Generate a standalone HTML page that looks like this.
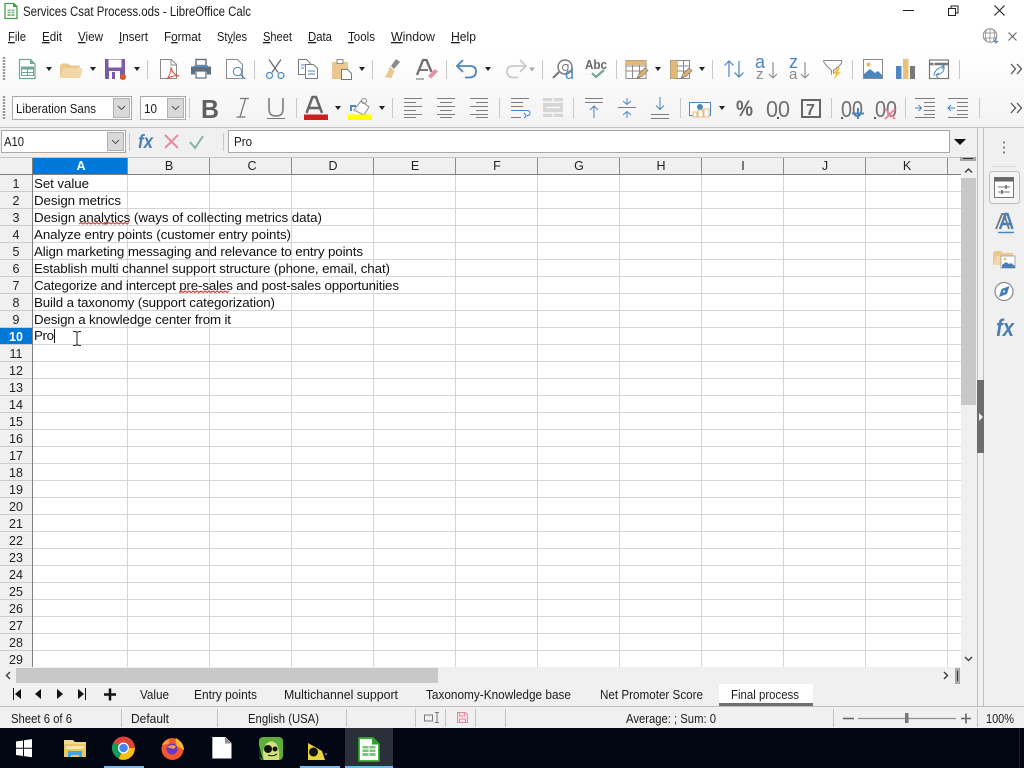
<!DOCTYPE html>
<html><head><meta charset="utf-8"><title>Services Csat Process.ods - LibreOffice Calc</title>
<style>
html,body{margin:0;padding:0;width:1024px;height:768px;overflow:hidden;background:#fff}
svg{display:block}
text{font-family:"Liberation Sans",sans-serif;fill:#1c1c1c}
.ui{font-size:13px}
.c{font-size:13.33px;fill:#111}
.h{font-size:12.5px;text-anchor:middle;fill:#222}
.r{font-size:12.5px;text-anchor:middle;fill:#222}
</style></head><body>
<svg width="1024" height="768" viewBox="0 0 1024 768" xmlns="http://www.w3.org/2000/svg">
<defs>
<linearGradient id="tb" x1="0" y1="0" x2="0" y2="1"><stop offset="0" stop-color="#fff"/><stop offset="1" stop-color="#f3f3f3"/></linearGradient>
</defs>
<rect width="1024" height="768" fill="#fff"/>
<rect x="0" y="50" width="1024" height="77" fill="url(#tb)"/>
<rect x="0" y="127" width="1024" height="1" fill="#c4c4c4"/>
<rect x="0" y="128" width="1024" height="30" fill="#f0f0f0"/>

<!-- title -->
<path d="M5 3.500h9l3 3v12H5z" fill="#fff" stroke="#43a047" stroke-width="1.300"/><path d="M13 3l4 4h-4z" fill="#43a047"/><path d="M7.500 9.500h7v6.500h-7z" fill="#7cb87f"/><path d="M7.500 11.500h7M7.500 13.700h7M11 9.500v6.500" stroke="#fff" stroke-width=".8"/>
<text x="23" y="16" font-size="13.500" textLength="228" lengthAdjust="spacingAndGlyphs">Services Csat Process.ods - LibreOffice Calc</text>
<path d="M903 10.500h11" stroke="#222" stroke-width="1"/>
<path d="M951 8V6h7v7h-2.500" fill="none" stroke="#222"/><rect x="948.500" y="8.500" width="7" height="7" fill="none" stroke="#222"/>
<path d="M994.500 5.500l10 10M1004.500 5.500l-10 10" stroke="#222" stroke-width="1.100"/>

<!-- menu -->
<g>
<text x="8" y="41" class="ui" textLength="18" lengthAdjust="spacingAndGlyphs"><tspan text-decoration="underline">F</tspan>ile</text>
<text x="42" y="41" class="ui" textLength="20" lengthAdjust="spacingAndGlyphs"><tspan text-decoration="underline">E</tspan>dit</text>
<text x="78" y="41" class="ui" textLength="25" lengthAdjust="spacingAndGlyphs"><tspan text-decoration="underline">V</tspan>iew</text>
<text x="119" y="41" class="ui" textLength="29" lengthAdjust="spacingAndGlyphs"><tspan text-decoration="underline">I</tspan>nsert</text>
<text x="164" y="41" class="ui" textLength="37" lengthAdjust="spacingAndGlyphs">F<tspan text-decoration="underline">o</tspan>rmat</text>
<text x="217" y="41" class="ui" textLength="30" lengthAdjust="spacingAndGlyphs">St<tspan text-decoration="underline">y</tspan>les</text>
<text x="263" y="41" class="ui" textLength="29" lengthAdjust="spacingAndGlyphs"><tspan text-decoration="underline">S</tspan>heet</text>
<text x="308" y="41" class="ui" textLength="24" lengthAdjust="spacingAndGlyphs"><tspan text-decoration="underline">D</tspan>ata</text>
<text x="348" y="41" class="ui" textLength="27" lengthAdjust="spacingAndGlyphs"><tspan text-decoration="underline">T</tspan>ools</text>
<text x="391" y="41" class="ui" textLength="44" lengthAdjust="spacingAndGlyphs"><tspan text-decoration="underline">W</tspan>indow</text>
<text x="451" y="41" class="ui" textLength="25" lengthAdjust="spacingAndGlyphs"><tspan text-decoration="underline">H</tspan>elp</text>
</g>
<!-- globe + close -->
<circle cx="990" cy="35.500" r="6.800" fill="none" stroke="#8a8a8a"/><path d="M983.500 33h13M983.500 38h13M990 29v13M986.500 30q-2 5.500 0 11M993.500 30q2 5.500 0 11" stroke="#8a8a8a" stroke-width=".8" fill="none"/><path d="M996 37v6M994 41l2 2 2-2" stroke="#4a86c0" fill="none"/>
<path d="M1008.500 32.500l8 8M1016.500 32.500l-8 8" stroke="#666" stroke-width="1.100"/>

<!-- toolbar 1 -->
<g fill="none">
<path d="M4 57v23" stroke="#9a9a9a" stroke-width="2.500" stroke-dasharray="2 1"/>
<path d="M4 96v23" stroke="#9a9a9a" stroke-width="2.500" stroke-dasharray="2 1"/>
<g stroke="#c8c8c8"><path d="M147.500 60v19M254.500 60v19M372.500 60v19M446.500 60v19M542.500 60v19M616.500 60v19M712.500 60v19M852.500 60v19M959.500 60v19"/>
<path d="M189.500 98v20M296.500 98v20M392.500 98v20M499.500 98v20M573.500 98v20M680.500 98v20M831.500 98v20M905.500 98v20M979.500 98v20"/></g>
<!-- new -->
<path d="M19.500 59.500h11l4.500 4.500v14.500H19.500z" stroke="#6fa894" stroke-width="1.200" fill="#fff"/><path d="M30 59l5 5h-5z" fill="#6fa894"/><rect x="21.500" y="67" width="12" height="8.500" fill="#fff" stroke="#6fa894"/><path d="M21.500 67h12v2.500h-12z" fill="#6fa894"/><path d="M21.500 72.500h12M27.500 69v6" stroke="#6fa894"/>
<!-- folder -->
<path d="M60 78V65.500l2-2h6l2 2h10v2l-1 0z" fill="#e9c78f"/><path d="M60 78l3-10h19.500l-2 10z" fill="#f3d7a7"/>
<!-- save -->
<path d="M105 59h20v20h-20z" fill="#7c5aa6"/><rect x="108.500" y="59.500" width="13" height="8" fill="#fff"/><rect x="109" y="71" width="11" height="8" fill="#fff"/><rect x="112" y="72" width="3" height="7" fill="#7c5aa6"/><circle cx="123" cy="77" r="3" fill="#e0552f"/>
<!-- pdf -->
<path d="M160.500 59.500h11l5 5v14h-16z" stroke="#8b8b8b" fill="#fff"/><path d="M171 60v5h5" stroke="#8b8b8b"/><path d="M167 79q4-5 4-12q1 7 8 9q-7-1-12 3z" stroke="#d8553c"/>
<!-- print -->
<rect x="196" y="59.500" width="10" height="6" fill="#fff" stroke="#606f7c" stroke-width="1.400"/><path d="M191 66.500h20v8h-4v-3h-12v3h-4z" fill="#606f7c"/><rect x="196" y="71" width="10" height="7" fill="#fff" stroke="#606f7c" stroke-width="1.200"/><path d="M194 66h14" stroke="#5a96cf" stroke-width="1.500"/>
<!-- preview -->
<path d="M226.500 59.500h11l5 5v14h-16z" stroke="#8b8b8b" fill="#fff"/><circle cx="237.500" cy="71.500" r="4.200" stroke="#4a86c0" fill="#fff"/><path d="M240.500 74.500l4.500 4.500" stroke="#4a86c0" stroke-width="1.300"/>
<!-- cut -->
<path d="M269 59.500l9 13M281 59.500l-9 13" stroke="#6b6b6b" stroke-width="1.300"/><circle cx="269.500" cy="75.500" r="3" stroke="#4a86c0" stroke-width="1.200"/><circle cx="281" cy="75.500" r="3" stroke="#4a86c0" stroke-width="1.200"/>
<!-- copy -->
<path d="M298.500 59.500h8l4 4v11h-12z" stroke="#7a7a7a" fill="#fff"/><path d="M305.500 64.500h8l4 4v10h-12z" stroke="#7a7a7a" fill="#fff"/><path d="M301 65h4M301 68h3M308 71h7M308 74h7" stroke="#4a86c0"/>
<!-- paste -->
<path d="M332 62h16v17h-16z" fill="#e9c78f"/><rect x="337" y="59.500" width="6" height="4" stroke="#8b8b8b" fill="#fff"/><path d="M341.500 69.500h6l4 4v6h-10z" fill="#fff" stroke="#777"/>
<!-- brush -->
<path d="M396 59l4 3-6 7-3-3z" fill="#8b8b8b"/><path d="M389.500 66.500l5 4.500-3 7-7-1q4-4 5-10.500z" fill="#e9c78f"/>
<!-- clear -->
<path d="M417 75l6-15h3.500l5 12" stroke="#6e6e6e" stroke-width="2.300"/><path d="M420 70h8" stroke="#6e6e6e" stroke-width="1.800"/><path d="M416 79h8" stroke="#6e6e6e"/><path d="M428 76l7-7 3 2.500-7 7z" fill="#e88ea0"/>
<!-- undo -->
<path d="M463 60l-6 6 6 6M457.500 66h12.500q6 0 6 5.500t-6 6h-5" stroke="#4a86c0" stroke-width="1.800"/>
<!-- redo -->
<path d="M520 60l6 6-6 6M525.500 66H513q-6 0-6 5.500t6 6h5" stroke="#c9c9c9" stroke-width="1.800"/>
<!-- find -->
<circle cx="565" cy="67" r="7" stroke="#777" stroke-width="1.400"/><path d="M559 72l-6 6" stroke="#777" stroke-width="2"/><path d="M568 66a3 3 0 1 0 0 3v-5" stroke="#777"/>
<text x="565" y="79" font-size="16" style="fill:#4a86c0">d</text>
<!-- spell -->
<text x="585" y="69" font-size="12.500" font-weight="bold" style="fill:#666" textLength="22" lengthAdjust="spacingAndGlyphs">Abc</text><path d="M592 73l4 4 8-7" stroke="#6fa894" stroke-width="2.200"/>
<!-- table icons -->
<g stroke="#8b8b8b"><rect x="626" y="60.500" width="20" height="18" fill="#fff"/><path d="M626 66h20M626 71h20M632.500 61v17M639.500 61v17"/></g><rect x="626" y="60.500" width="20" height="4.500" fill="#e0b878"/><path d="M637 78l2-4 6-6 3 2.500-6 6z" fill="#e2b06c" stroke="#777" stroke-width=".7"/>
<g stroke="#8b8b8b"><rect x="670.500" y="60.500" width="19" height="18" fill="#fff"/><path d="M670 66h20M670 71h20M677 61v17M683.500 61v17"/></g><rect x="670.500" y="60.500" width="6.500" height="18" fill="#e0b878"/><path d="M681 78l2-4 6-6 3 2.500-6 6z" fill="#e2b06c" stroke="#777" stroke-width=".7"/>
<!-- sort -->
<path d="M729 77V61M724.500 65.500L729 61l4.500 4.500M739 61v16M734.500 72.500L739 77l4.500-4.500" stroke="#4a86c0" stroke-width="1.200"/>
<text x="755" y="68" font-size="18" style="fill:#4a86c0">a</text><text x="756" y="79" font-size="15" style="fill:#8a8a8a">z</text><path d="M773 62v16M769 74l4 4 4-4" stroke="#888" stroke-width="1.100"/>
<text x="789" y="68" font-size="18" style="fill:#4a86c0">z</text><text x="789" y="79" font-size="15" style="fill:#8a8a8a">a</text><path d="M805 62v16M801 74l4 4 4-4" stroke="#888" stroke-width="1.100"/>
<!-- autofilter -->
<path d="M823.500 60.500h18q1 2-2 5l-6 5v3" stroke="#888"/><path d="M823.500 60.500q0 2 3 5l5 5v4" stroke="#888"/><path d="M838 67l-5 7h3l-3 6 8-8h-3l2-5z" fill="#f0c050"/>
<!-- image -->
<rect x="863.500" y="59.500" width="19" height="19" stroke="#8a8a8a" fill="#fff"/><circle cx="868.500" cy="64.500" r="2" fill="#e9b75e"/><path d="M864 78v-4l6-5 5 4 3-2 4 4v3z" fill="#4a86c0"/>
<!-- chart -->
<rect x="896" y="66" width="5.500" height="13" fill="#4a86c0"/><rect x="903" y="59" width="5.500" height="20" fill="#e9c078"/><rect x="910" y="66" width="5" height="13" fill="#777"/>
<!-- pivot -->
<rect x="929.500" y="60" width="19" height="18.500" stroke="#777" stroke-width="1.200" fill="#fff"/><path d="M930 64h18" stroke="#777" stroke-width="2.500"/><path d="M934 61v4" stroke="#fff"/><path d="M934 76q0-7 10-10M941 64l3 2-2 3M944 66q1 7-7 9M939 73l-3 2 2 3" stroke="#4a86c0"/>
<!-- >> -->
<path d="M1011 64l4.500 5-4.500 5M1017 64l4.500 5-4.500 5" stroke="#555" stroke-width="1.300"/>
<path d="M1011 103l4.500 5-4.500 5M1017 103l4.500 5-4.500 5" stroke="#555" stroke-width="1.300"/>

<!-- Toolbar 2 -->
<rect x="12.500" y="96.500" width="119" height="23" fill="#fff" stroke="#a9a9a9"/><rect x="113.500" y="98.500" width="16" height="19" fill="#d9d9d9" stroke="#b0b0b0"/><path d="M118 106l3.500 3.500 3.500-3.500" stroke="#555"/>
<rect x="140.500" y="96.500" width="45" height="23" fill="#fff" stroke="#a9a9a9"/><rect x="167.500" y="98.500" width="16" height="19" fill="#d9d9d9" stroke="#b0b0b0"/><path d="M172 106l3.500 3.500 3.500-3.500" stroke="#555"/>
</g>
<text x="16" y="113" font-size="13" textLength="80" lengthAdjust="spacingAndGlyphs">Liberation Sans</text>
<text x="144" y="113" font-size="13" textLength="13" lengthAdjust="spacingAndGlyphs">10</text>
<text x="201" y="118" font-size="26" font-weight="bold" style="fill:#606060" textLength="18" lengthAdjust="spacingAndGlyphs">B</text>
<g fill="none">
<path d="M240 98.500h9M236.500 117h9M245.500 98.500l-5.500 18.500" stroke="#777" stroke-width="1.300"/>
<path d="M269 98v11q0 7 7 7t7-7V98" stroke="#777" stroke-width="1.500"/><path d="M267 118.500h18" stroke="#777"/>
<path d="M306.500 113l6-16h3.500l6 16M309 108h11" stroke="#666" stroke-width="2.500"/><rect x="304" y="114.500" width="24" height="5.500" fill="#c9211e"/>
<path d="M354 110l7-9 8 6-5 8z" fill="#fff" stroke="#8a8a8a"/><circle cx="364" cy="101" r="2.500" stroke="#8a8a8a"/><path d="M351 111v-5h5" stroke="#4a86c0" stroke-width="2"/><rect x="348" y="114.500" width="24" height="5.500" fill="#ffff00"/>
<g stroke="#7d7d7d"><path d="M404 98.500h18M404 102.500h12M404 106.500h18M404 110.500h12M404 114.500h18M404 117.500h12"/>
<path d="M437 98.500h18M440 102.500h12M437 106.500h18M440 110.500h12M437 114.500h18M440 117.500h12"/>
<path d="M470 98.500h18M476 102.500h12M470 106.500h18M476 110.500h12M470 114.500h18M476 117.500h12"/>
<path d="M511 98.500h18M511 102.500h12M511 106.500h12M511 117.500h10"/></g>
<path d="M511 110.500h16q3 0 3 2.500t-3 2.500M524 113l2.500 3-2.500 2" stroke="#4a86c0"/>
<rect x="543" y="98" width="20" height="19" fill="#d6d6d6"/><path d="M543 102h20M543 113h20M553 98v4M553 113v4M546 107.500h14" stroke="#fff" stroke-width="1.200"/>
<g stroke="#7d7d7d"><path d="M585 98.500h18M585 102.500h18M618 107.500h18M651 114.500h18M651 118.500h18"/></g>
<path d="M594 118v-11M590 110l4-4 4 4M627 98v6.500M623 101l4 3.500 4-3.500M627 118v-6.500M623 115l4-3.500 4 3.500M660 97v12M656 105.500l4 4 4-4" stroke="#4a86c0"/>
<rect x="689.500" y="102.500" width="21" height="13" stroke="#4a86c0" fill="#fff"/><circle cx="700" cy="107" r="3" fill="#4a86c0"/><g stroke="#e0b878" fill="#fff"><rect x="693" y="112" width="4" height="5"/><rect x="698" y="110" width="5" height="7"/><rect x="704" y="109" width="5" height="8"/></g>
<rect x="802" y="100" width="18" height="17" stroke="#666" stroke-width="2"/>
<path d="M915 108h6M918.500 105l3 3-3 3" stroke="#4a86c0"/>
<g stroke="#7d7d7d"><path d="M915 98.500h20M924 102.500h11M924 106.500h11M924 110.500h11M924 114.500h11M915 117.500h20M948 98.500h20M957 102.500h11M957 106.500h11M957 110.500h11M957 114.500h11M948 117.500h20"/></g>
<path d="M948 108h7M951 105l-3 3 3 3" stroke="#4a86c0"/>
</g>
<text x="736" y="116" font-size="22" font-weight="bold" style="fill:#666" textLength="17" lengthAdjust="spacingAndGlyphs">%</text>
<text x="766" y="117" font-size="23" style="fill:#707070" textLength="24" lengthAdjust="spacingAndGlyphs">00</text><rect x="777" y="117" width="2" height="2" fill="#555"/>
<text x="806" y="115" font-size="16" font-weight="bold" style="fill:#666">7</text>
<text x="841" y="117" font-size="23" style="fill:#707070" textLength="22" lengthAdjust="spacingAndGlyphs">00</text><rect x="841" y="117" width="2" height="2" fill="#555"/><path d="M858 108v11M852 113.500h12" stroke="#4a86c0" stroke-width="2" fill="none"/>
<text x="875" y="117" font-size="23" style="fill:#707070" textLength="22" lengthAdjust="spacingAndGlyphs">00</text><rect x="874" y="117" width="2" height="2" fill="#555"/><path d="M885 109l10 10M895 109l-10 10" stroke="#e88ea0" stroke-width="2" fill="none"/>
<!-- small dropdown arrows -->
<path d="M46 67h6l-3 4zM90 67h6l-3 4zM134 67h6l-3 4zM359 67h6l-3 4zM485 67h6l-3 4zM655 67h6l-3 4zM699 67h6l-3 4zM335 106h6l-3 4zM379 106h6l-3 4zM719 106h6l-3 4z" fill="#222"/>
<path d="M529 67.500h6l-3 4z" fill="#aaa"/>

<!-- formula bar -->
<rect x="1.500" y="130.500" width="124" height="22" fill="#fff" stroke="#a9a9a9"/><rect x="107.500" y="132.500" width="16" height="18" fill="#d9d9d9" stroke="#b0b0b0"/><path d="M112 140l3.500 3.500 3.500-3.500" stroke="#555" fill="none"/>
<text x="4" y="146" font-size="13" textLength="20" lengthAdjust="spacingAndGlyphs">A10</text>
<path d="M129.500 133v18M223.500 133v18" stroke="#c8c8c8"/>
<text x="138" y="148" font-size="19" font-weight="bold" font-style="italic" style="fill:#4a7fb5" textLength="15" lengthAdjust="spacingAndGlyphs">fx</text>
<path d="M165 135l13 13M178 135l-13 13" stroke="#e78aa0" stroke-width="2" fill="none"/>
<path d="M190 142l5 6 8-12" stroke="#83b5a3" stroke-width="2" fill="none"/>
<rect x="228.500" y="130.500" width="721" height="22" fill="#fff" stroke="#a9a9a9"/>
<text x="234" y="146" font-size="13" textLength="18" lengthAdjust="spacingAndGlyphs">Pro</text>
<path d="M954 139h12l-6 6z" fill="#111"/>

<!-- sheet header -->
<rect x="0" y="157" width="961" height="18" fill="#f0f0f0"/>
<rect x="32" y="157" width="96" height="18" fill="#0078d7"/>
<rect x="0" y="175" width="32" height="492" fill="#f0f0f0"/>
<rect x="0" y="327.500" width="32" height="17" fill="#0078d7"/>
<rect x="32" y="175" width="929" height="492" fill="#fff"/>
<!-- grid -->
<path fill="none" stroke="#d6d6d6" d="M33 191.500H961M33 208.500H961M33 225.500H961M33 242.500H961M33 259.500H961M33 276.500H961M33 293.500H961M33 310.500H961M33 327.500H961M33 344.500H961M33 361.500H961M33 378.500H961M33 395.500H961M33 412.500H961M33 429.500H961M33 446.500H961M33 463.500H961M33 480.500H961M33 497.500H961M33 514.500H961M33 531.500H961M33 548.500H961M33 565.500H961M33 582.500H961M33 599.500H961M33 616.500H961M33 633.500H961M33 650.500H961M127.500 175V667M209.500 175V667M291.500 175V667M373.500 175V667M455.500 175V667M537.500 175V667M619.500 175V667M701.500 175V667M783.500 175V667M865.500 175V667M947.500 175V667"/>
<path fill="none" stroke="#cccccc" d="M0 191.500H32M0 208.500H32M0 225.500H32M0 242.500H32M0 259.500H32M0 276.500H32M0 293.500H32M0 310.500H32M0 327.500H32M0 344.500H32M0 361.500H32M0 378.500H32M0 395.500H32M0 412.500H32M0 429.500H32M0 446.500H32M0 463.500H32M0 480.500H32M0 497.500H32M0 514.500H32M0 531.500H32M0 548.500H32M0 565.500H32M0 582.500H32M0 599.500H32M0 616.500H32M0 633.500H32M0 650.500H32"/>
<path fill="none" stroke="#8c8c8c" d="M127.500 157v18M209.500 157v18M291.500 157v18M373.500 157v18M455.500 157v18M537.500 157v18M619.500 157v18M701.500 157v18M783.500 157v18M865.500 157v18M947.500 157v18"/>
<path d="M0 174.500H961" stroke="#7f7f7f"/><path d="M32.500 157V667" stroke="#7f7f7f"/>
<path d="M0 157.500H961" stroke="#c4c4c4"/>
<!-- column headers -->
<text x="81" y="170" class="h" font-weight="bold" style="fill:#fff">A</text>
<text x="169" y="170" class="h">B</text><text x="252" y="170" class="h">C</text><text x="333" y="170" class="h">D</text><text x="415" y="170" class="h">E</text><text x="497" y="170" class="h">F</text><text x="579" y="170" class="h">G</text><text x="661" y="170" class="h">H</text><text x="743" y="170" class="h">I</text><text x="825" y="170" class="h">J</text><text x="907" y="170" class="h">K</text>
<!-- row numbers -->
<text x="16" y="188" class="r">1</text><text x="16" y="205" class="r">2</text><text x="16" y="222" class="r">3</text><text x="16" y="239" class="r">4</text><text x="16" y="256" class="r">5</text><text x="16" y="273" class="r">6</text><text x="16" y="290" class="r">7</text><text x="16" y="307" class="r">8</text><text x="16" y="324" class="r">9</text>
<text x="16" y="341" class="r" font-weight="bold" style="fill:#fff">10</text>
<text x="16" y="358" class="r">11</text><text x="16" y="375" class="r">12</text><text x="16" y="392" class="r">13</text><text x="16" y="409" class="r">14</text><text x="16" y="426" class="r">15</text><text x="16" y="443" class="r">16</text><text x="16" y="460" class="r">17</text><text x="16" y="477" class="r">18</text><text x="16" y="494" class="r">19</text><text x="16" y="511" class="r">20</text><text x="16" y="528" class="r">21</text><text x="16" y="545" class="r">22</text><text x="16" y="562" class="r">23</text><text x="16" y="579" class="r">24</text><text x="16" y="596" class="r">25</text><text x="16" y="613" class="r">26</text><text x="16" y="630" class="r">27</text><text x="16" y="647" class="r">28</text><text x="16" y="664" class="r">29</text>
<!-- cells -->
<text x="34" y="188" class="c" textLength="55">Set value</text>
<text x="34" y="205" class="c" textLength="87">Design metrics</text>
<text x="34" y="222" class="c" textLength="288">Design analytics (ways of collecting metrics data)</text>
<text x="34" y="239" class="c" textLength="257">Analyze entry points (customer entry points)</text>
<text x="34" y="256" class="c" textLength="329">Align marketing messaging and relevance to entry points</text>
<text x="34" y="273" class="c" textLength="356">Establish multi channel support structure (phone, email, chat)</text>
<text x="34" y="290" class="c" textLength="365">Categorize and intercept pre-sales and post-sales opportunities</text>
<text x="34" y="307" class="c" textLength="241">Build a taxonomy (support categorization)</text>
<text x="34" y="324" class="c" textLength="197">Design a knowledge center from it</text>
<text x="34" y="340" class="c" textLength="20">Pro</text>
<path d="M79 224l2-1.500 2 1.500 2-1.500 2 1.500 2-1.500 2 1.500 2-1.500 2 1.500 2-1.500 2 1.500 2-1.500 2 1.500 2-1.500 2 1.500 2-1.500 2 1.500 2-1.500 2 1.500 2-1.500 2 1.500 2-1.500 2 1.500 2-1.500 2 1.500 2-1.500" stroke="#d9473f" stroke-width="1.200" fill="none"/>
<path d="M179 292.500l2-1.500 2 1.500 2-1.500 2 1.500 2-1.500 2 1.500 2-1.500 2 1.500 2-1.500 2 1.500 2-1.500 2 1.500 2-1.500 2 1.500 2-1.500 2 1.500 2-1.500 2 1.500 2-1.500 2 1.500 2-1.500 2 1.500 2-1.500 2 1.500 2-1.500" stroke="#d9473f" stroke-width="1.200" fill="none"/>
<!-- text cursor + mouse -->
<path d="M54.500 329v14" stroke="#111"/>
<path d="M73 331.500h2.500l1.500 1 1.500-1H81M77 332.500v12M73 345.500h2.500l1.500-1 1.500 1H81" stroke="#333" stroke-width="1.100" fill="none"/>

<!-- v scrollbar -->
<rect x="961" y="157" width="16" height="511" fill="#f0f0f0"/>
<rect x="960" y="157" width="16" height="4" fill="#a8a8a8"/><path d="M963 158.500h10" stroke="#333"/>
<path d="M965 172.500l3.500-3.500 3.500 3.500" stroke="#444" stroke-width="1.500" fill="none"/>
<rect x="961" y="178" width="15" height="227" fill="#c8c8c8"/>
<path d="M965 657l3.500 3.500 3.500-3.500" stroke="#444" stroke-width="1.500" fill="none"/>
<!-- sidebar -->
<rect x="977" y="128" width="47" height="579" fill="#f0f0f0"/>
<path d="M977.500 128V706M983.500 128V706" stroke="#c0c0c0"/>
<rect x="977" y="380" width="7" height="73" fill="#6d6d6d"/><path d="M979 413l4 4-4 4z" fill="#eee"/>
<path d="M1004 142.500v2M1004 147.500v2M1004 152.500v2" stroke="#666" stroke-width="1.600" transform="translate(0,-1)"/>
<path d="M992 166.500h24" stroke="#dcdcdc"/>
<rect x="989.500" y="171.500" width="30" height="32" rx="3" fill="#f4f4f4" stroke="#bdbdbd"/>
<rect x="994.500" y="177.500" width="19" height="20" fill="#fff" stroke="#777"/><rect x="994.500" y="177.500" width="19" height="4" fill="#666"/>
<path d="M998 187h12M998 192h12" stroke="#777"/><path d="M1006 185v4M1002 190v4" stroke="#555" stroke-width="1.300"/>
<path d="M996 229l6-15 2 0 5 15" stroke="#777" stroke-width="1.800" fill="none"/>
<path d="M1000 229l5.500-15h2l5 15M1002 224h8" stroke="#4a7fb5" stroke-width="2.400" fill="none"/><path d="M998 232.500h16" stroke="#4a86c0" stroke-width="1.500"/>
<path d="M993 264v-11l2-2h6l2 2h10v3" fill="#e9c78f"/><path d="M993 265l3-9h17v9z" fill="#f3d7a7"/><rect x="1001" y="256" width="14" height="12" fill="#fff" stroke="#aaa"/><path d="M1002 268v-3l4-3 3 2 2-1 4 3v2z" fill="#4a7fb5"/><circle cx="1005" cy="259" r="1.300" fill="#e9b75e"/>
<circle cx="1004" cy="291.500" r="9" fill="#fff" stroke="#8a8a8a" stroke-width="1.200"/><path d="M1009.500 286l-8 3-2.500 8 8-3z" fill="#4a7fb5"/><circle cx="1004" cy="291.500" r="1" fill="#fff"/>
<text x="996" y="336" font-size="24" font-weight="bold" font-style="italic" style="fill:#4a7fb5" textLength="18" lengthAdjust="spacingAndGlyphs">fx</text>

<!-- h scrollbar & tabs -->
<rect x="0" y="667" width="977" height="40" fill="#f0f0f0"/>
<rect x="16" y="668" width="422" height="15" fill="#c8c8c8"/>
<path d="M10 672l-3.500 3.500 3.500 3.500" stroke="#444" stroke-width="1.500" fill="none"/>
<path d="M944 672l3.500 3.500-3.500 3.500" stroke="#444" stroke-width="1.500" fill="none"/>
<rect x="955" y="668" width="5" height="16" fill="#a8a8a8"/><path d="M957.500 671v10" stroke="#333"/>
<!-- nav -->
<path d="M13.500 688v12" stroke="#111"/><path d="M21 689l-6 5 6 5z" fill="#111"/>
<path d="M41 689l-6 5 6 5z" fill="#111"/><path d="M57 689l6 5-6 5z" fill="#111"/>
<path d="M78 689l6 5-6 5z" fill="#111"/><path d="M85.500 688v12" stroke="#111"/>
<path d="M104 694.500h12M110 688.500v12" stroke="#111" stroke-width="2.500"/>
<rect x="719" y="684" width="94" height="22" fill="#fff"/><rect x="719" y="703" width="94" height="3" fill="#6e6e6e"/>
<text x="140" y="699" font-size="13" textLength="29" lengthAdjust="spacingAndGlyphs">Value</text>
<text x="194" y="699" font-size="13" textLength="63" lengthAdjust="spacingAndGlyphs">Entry points</text>
<text x="284" y="699" font-size="13" textLength="114" lengthAdjust="spacingAndGlyphs">Multichannel support</text>
<text x="426" y="699" font-size="13" textLength="145" lengthAdjust="spacingAndGlyphs">Taxonomy-Knowledge base</text>
<text x="600" y="699" font-size="13" textLength="103" lengthAdjust="spacingAndGlyphs">Net Promoter Score</text>
<text x="731" y="699" font-size="13" textLength="68" lengthAdjust="spacingAndGlyphs">Final process</text>
<path d="M0 706.500H1024" stroke="#bdbdbd"/>

<!-- status bar -->
<rect x="0" y="707" width="1024" height="21" fill="#f0f0f0"/>
<path d="M121.500 709v18M217.500 709v18M346.500 709v18M415.500 709v18M445.500 709v18M475.500 709v18M505.500 709v18M833.500 709v18M977.500 709v18" stroke="#c4c4c4"/>
<text x="11" y="723" font-size="12.800" textLength="61" lengthAdjust="spacingAndGlyphs">Sheet 6 of 6</text>
<text x="131" y="723" font-size="12.800" textLength="38" lengthAdjust="spacingAndGlyphs">Default</text>
<text x="248" y="723" font-size="12.800" textLength="71" lengthAdjust="spacingAndGlyphs">English (USA)</text>
<text x="626" y="723" font-size="12.800" textLength="90" lengthAdjust="spacingAndGlyphs">Average: ; Sum: 0</text>
<text x="986" y="723" font-size="12.800" textLength="28" lengthAdjust="spacingAndGlyphs">100%</text>
<rect x="424.500" y="715" width="8" height="6" fill="none" stroke="#777"/><path d="M435 712.500h4M437 712.500v10M435 722.500h4" stroke="#777" fill="none"/>
<path d="M457.500 712.500h8l2 2v8h-10z" fill="#fbe4e9" stroke="#e78aa0"/><path d="M459.500 713v3h5v-3M459.500 722v-3h6v3" stroke="#e78aa0" fill="none"/>
<path d="M843 718.500h11" stroke="#666" stroke-width="1.600"/>
<path d="M858 718.500h98" stroke="#8f8f8f" stroke-width="1.200"/>
<rect x="905" y="713" width="3.500" height="10" fill="#777"/>
<path d="M961 718.500h10M966 713.500v10" stroke="#666" stroke-width="1.600"/>

<!-- taskbar -->
<rect x="0" y="728" width="1024" height="40" fill="#020713"/>
<rect x="345" y="728" width="48" height="40" fill="#2a3037"/>
<rect x="104" y="766" width="40" height="2" fill="#76b9ed"/><rect x="300" y="766" width="40" height="2" fill="#76b9ed"/><rect x="345" y="766" width="48" height="2" fill="#76b9ed"/>
<path d="M16 741.500l7-1v7.300h-7zM24 740.300l8-1.200v8.700h-8zM16 748.800h7v7.200l-7-1zM24 748.800h8v8.500l-8-1.200z" fill="#fff"/>
<!-- explorer -->
<path d="M64 740h9l2 2h11v15H64z" fill="#f0d98c"/><path d="M64 744h22v13H64z" fill="#e8c860"/><path d="M68 751h14v6h-3v-2h-8v2h-3z" fill="#3fa8e0"/><path d="M66 746h18v3H66z" fill="#f8e8b0"/>
<!-- chrome -->
<circle cx="123.500" cy="748" r="11.500" fill="#db4437"/><path d="M123.500 748l-10 -5.700a11.500 11.500 0 0 0 5 16z" fill="#0f9d58"/><path d="M123.500 748h11.300a11.500 11.500 0 0 1-16 11z" fill="#f4c20d"/><circle cx="123.500" cy="748" r="5.500" fill="#fff"/><circle cx="123.500" cy="748" r="4.300" fill="#4285f4"/>
<!-- firefox -->
<circle cx="172.500" cy="749" r="11" fill="#f2562f"/><path d="M176 738q8 5 8 12l-7-4q-2-4-1-8z" fill="#ffb62e"/><path d="M162 745q2-5 8-6-2 3-1 5z" fill="#ff9a2e"/><circle cx="172" cy="749" r="5.500" fill="#6a3bc0"/><path d="M167 747q4-3 9-1l-2 3z" fill="#f5a04a"/>
<!-- doc -->
<path d="M212.500 737h13l6 6v15.500h-19z" fill="#fff"/><path d="M225 737l6.500 6.500H225z" fill="#8f8f8f"/><path d="M212.500 737v21.500" stroke="#aaa"/>
<!-- green app -->
<rect x="259" y="737" width="24" height="23" rx="4" fill="#5fae3b"/><path d="M264 760q-3-10 3-17 6-4 10 2 3 6 2 15z" fill="#d3e27a"/><circle cx="268" cy="749" r="4" fill="#111"/><circle cx="275" cy="749" r="2.500" fill="#111"/><path d="M268 755q5 2 9-1" stroke="#111" fill="none"/><path d="M259 745v12l4 3z" fill="#0b2a12"/>
<!-- yellow app -->
<path d="M308 743l14 8 3 9h-17z" fill="#e9d33a"/><circle cx="313.500" cy="752" r="4.500" fill="#111"/><circle cx="326" cy="754" r="1.300" fill="#666"/>
<!-- calc -->
<path d="M359 738h14l6 6v17h-20z" fill="#fff" stroke="#2aa52a" stroke-width="1.700"/><path d="M372 737l7.500 7.500H372z" fill="#2aa52a"/><rect x="362.500" y="746" width="13" height="10" fill="#7cc27c"/><path d="M362.500 749h13M362.500 752.500h13M369 746v10" stroke="#fff" stroke-width=".9"/>
<path d="M1019.500 728v40" stroke="#1b2029"/>
</svg>
</body></html>
